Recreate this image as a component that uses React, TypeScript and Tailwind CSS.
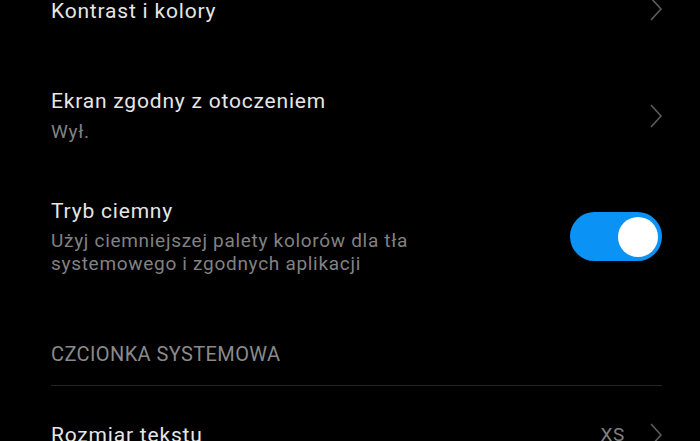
import React from "react";

function Chevron({ className = "" }: { className?: string }) {
  return (
    <svg width="12" height="24" viewBox="0 0 12 24" className={className} fill="none">
      <polyline points="1,1 11,12 1,23" stroke="#5e5e5e" strokeWidth="1.6" strokeLinejoin="miter" />
    </svg>
  );
}

const title = "text-[21px] leading-[26px] tracking-[0.8px] text-[#e6e6e6]";
const sub = "text-[19px] leading-[23px] tracking-[0.7px] text-[#828282]";

export default function App() {
  return (
    <div className="w-[700px] h-[441px] bg-black overflow-hidden font-['Roboto',sans-serif]">
      <div className="pl-[51px] pr-[38px] -mt-[2px]">
        {/* Row 1 */}
        <div className="flex items-center justify-between">
          <div className={title}>Kontrast i kolory</div>
          <Chevron className="-mt-[5px]" />
        </div>

        {/* Row 2 */}
        <div className="flex items-center justify-between mt-[64px]">
          <div>
            <div className={title}>Ekran zgodny z otoczeniem</div>
            <div className={`${sub} mt-[6px]`}>Wył.</div>
          </div>
          <Chevron />
        </div>

        {/* Row 3 */}
        <div className="flex items-center justify-between mt-[55px]">
          <div>
            <div className={title}>Tryb ciemny</div>
            <div className={`${sub} mt-[5px]`}>
              Użyj ciemniejszej palety kolorów dla tła
              <br />
              systemowego i zgodnych aplikacji
            </div>
          </div>
          <div className="w-[92px] h-[49px] rounded-full bg-[#0a93f4] flex items-center justify-end pr-[4px]">
            <div className="w-[40px] h-[40px] rounded-full bg-white" />
          </div>
        </div>

        {/* Section header */}
        <div className="mt-[66px] text-[20px] leading-[26px] tracking-[0.4px] text-[#8a8a8a]">CZCIONKA SYSTEMOWA</div>
        <div className="mt-[18px] h-px bg-[#242424]" />

        {/* Row 4 */}
        <div className="flex items-center justify-between mt-[36px]">
          <div className={title}>Rozmiar tekstu</div>
          <div className="flex items-center gap-[25px]">
            <span className="text-[19px] leading-[24px] tracking-[0.7px] text-[#808080]">XS</span>
            <Chevron />
          </div>
        </div>
      </div>
    </div>
  );
}
